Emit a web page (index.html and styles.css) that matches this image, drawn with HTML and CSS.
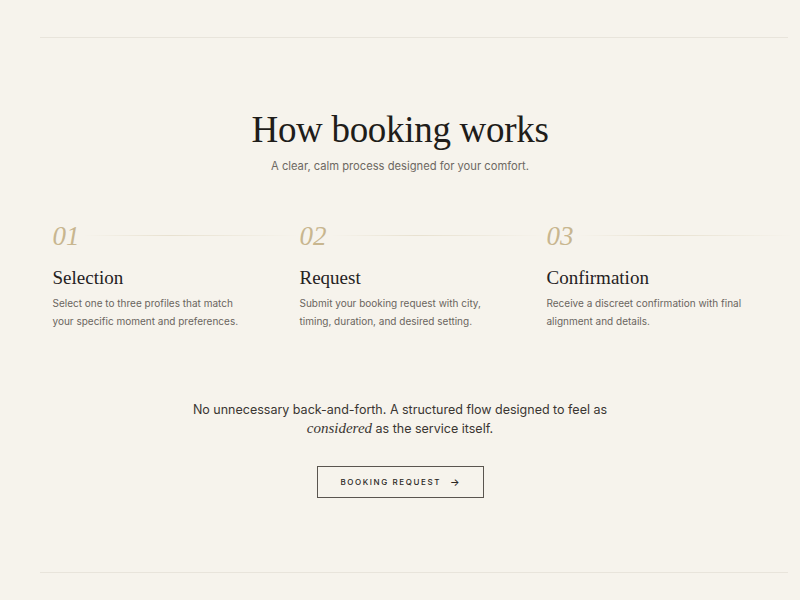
FILE: index.html
```html
<!DOCTYPE html>
<html lang="en">
<head>
<meta charset="utf-8">
<title>How booking works</title>
<link rel="stylesheet" href="styles.css">
</head>
<body>
<div class="page">
  <hr class="rule">
  <section class="how">
    <h2 class="title">How booking works</h2>
    <p class="subtitle">A clear, calm process designed for your comfort.</p>
    <div class="steps">
      <div class="step">
        <div class="num">01</div>
        <h3 class="step-title">Selection</h3>
        <p class="step-text">Select one to three profiles that match<br>your specific moment and preferences.</p>
      </div>
      <div class="step">
        <div class="num">02</div>
        <h3 class="step-title">Request</h3>
        <p class="step-text">Submit your booking request with city,<br>timing, duration, and desired setting.</p>
      </div>
      <div class="step">
        <div class="num">03</div>
        <h3 class="step-title">Confirmation</h3>
        <p class="step-text">Receive a discreet confirmation with final<br>alignment and details.</p>
      </div>
    </div>
    <p class="note">No unnecessary back-and-forth. A structured flow designed to feel as<br><em>considered</em> as the service itself.</p>
    <a class="btn" href="#">BOOKING REQUEST <span class="arrow">&rarr;</span></a>
  </section>
  <hr class="rule">
</div>
</body>
</html>
```
FILE: styles.css
```css
* { box-sizing: border-box; }
html, body { margin: 0; padding: 0; }
body {
  background: #f6f3ec;
  font-family: "Inter", "Liberation Sans", sans-serif;
  color: #2a2724;
  overflow-x: hidden;
}
.page {
  padding-top: 37px;
}
.rule {
  border: 0;
  height: 1px;
  background: #e8e4db;
  margin: 0 12px 0 40px;
}
.how {
  padding: 71px 0 74px;
  display: flex;
  flex-direction: column;
  align-items: center;
}
.title {
  font-family: "Liberation Serif", "DejaVu Serif", serif;
  font-weight: 400;
  font-size: 37px;
  line-height: 42px;
  margin: 0;
  color: #1f1d1a;
  letter-spacing: -0.3px;
}
.subtitle {
  margin: 7px 0 0;
  font-size: 11.2px;
  line-height: 16px;
  color: #6d6862;
}
.steps {
  display: grid;
  grid-template-columns: repeat(3, 207px);
  column-gap: 40px;
  margin-top: 46px;
  margin-left: 6px;
}
.step { position: relative; }
.num {
  position: relative;
  font-family: "Liberation Serif", "DejaVu Serif", serif;
  font-style: italic;
  font-size: 27px;
  line-height: 32px;
  color: #c8b68f;
}
.num::after {
  content: "";
  position: absolute;
  left: 30px;
  right: -40px;
  top: 15px;
  height: 1px;
  background: linear-gradient(to right, rgba(220,210,185,0), rgba(220,210,185,0.55) 40%, rgba(220,210,185,0));
}
.step-title {
  font-family: "Liberation Serif", "DejaVu Serif", serif;
  font-weight: 400;
  font-size: 19px;
  line-height: 24px;
  margin: 14px 0 0;
  color: #24211e;
}
.step-text {
  margin: 4px 0 0;
  font-size: 10px;
  line-height: 18px;
  color: #6a655e;
  white-space: nowrap;
}
.note {
  margin: 70px 0 0;
  text-align: center;
  font-size: 12.5px;
  line-height: 19px;
  color: #3a3632;
}
.note em {
  font-family: "Liberation Serif", "DejaVu Serif", serif;
  font-size: 15px;
}
.btn {
  margin-top: 28px;
  display: inline-flex;
  align-items: center;
  justify-content: center;
  width: 167px;
  height: 32px;
  border: 1px solid #5a554f;
  color: #2a2724;
  text-decoration: none;
  font-size: 8px;
  letter-spacing: 1.6px;
  font-weight: 500;
}
.arrow {
  margin-left: 9px;
  letter-spacing: 0;
  font-size: 10px;
}
```
